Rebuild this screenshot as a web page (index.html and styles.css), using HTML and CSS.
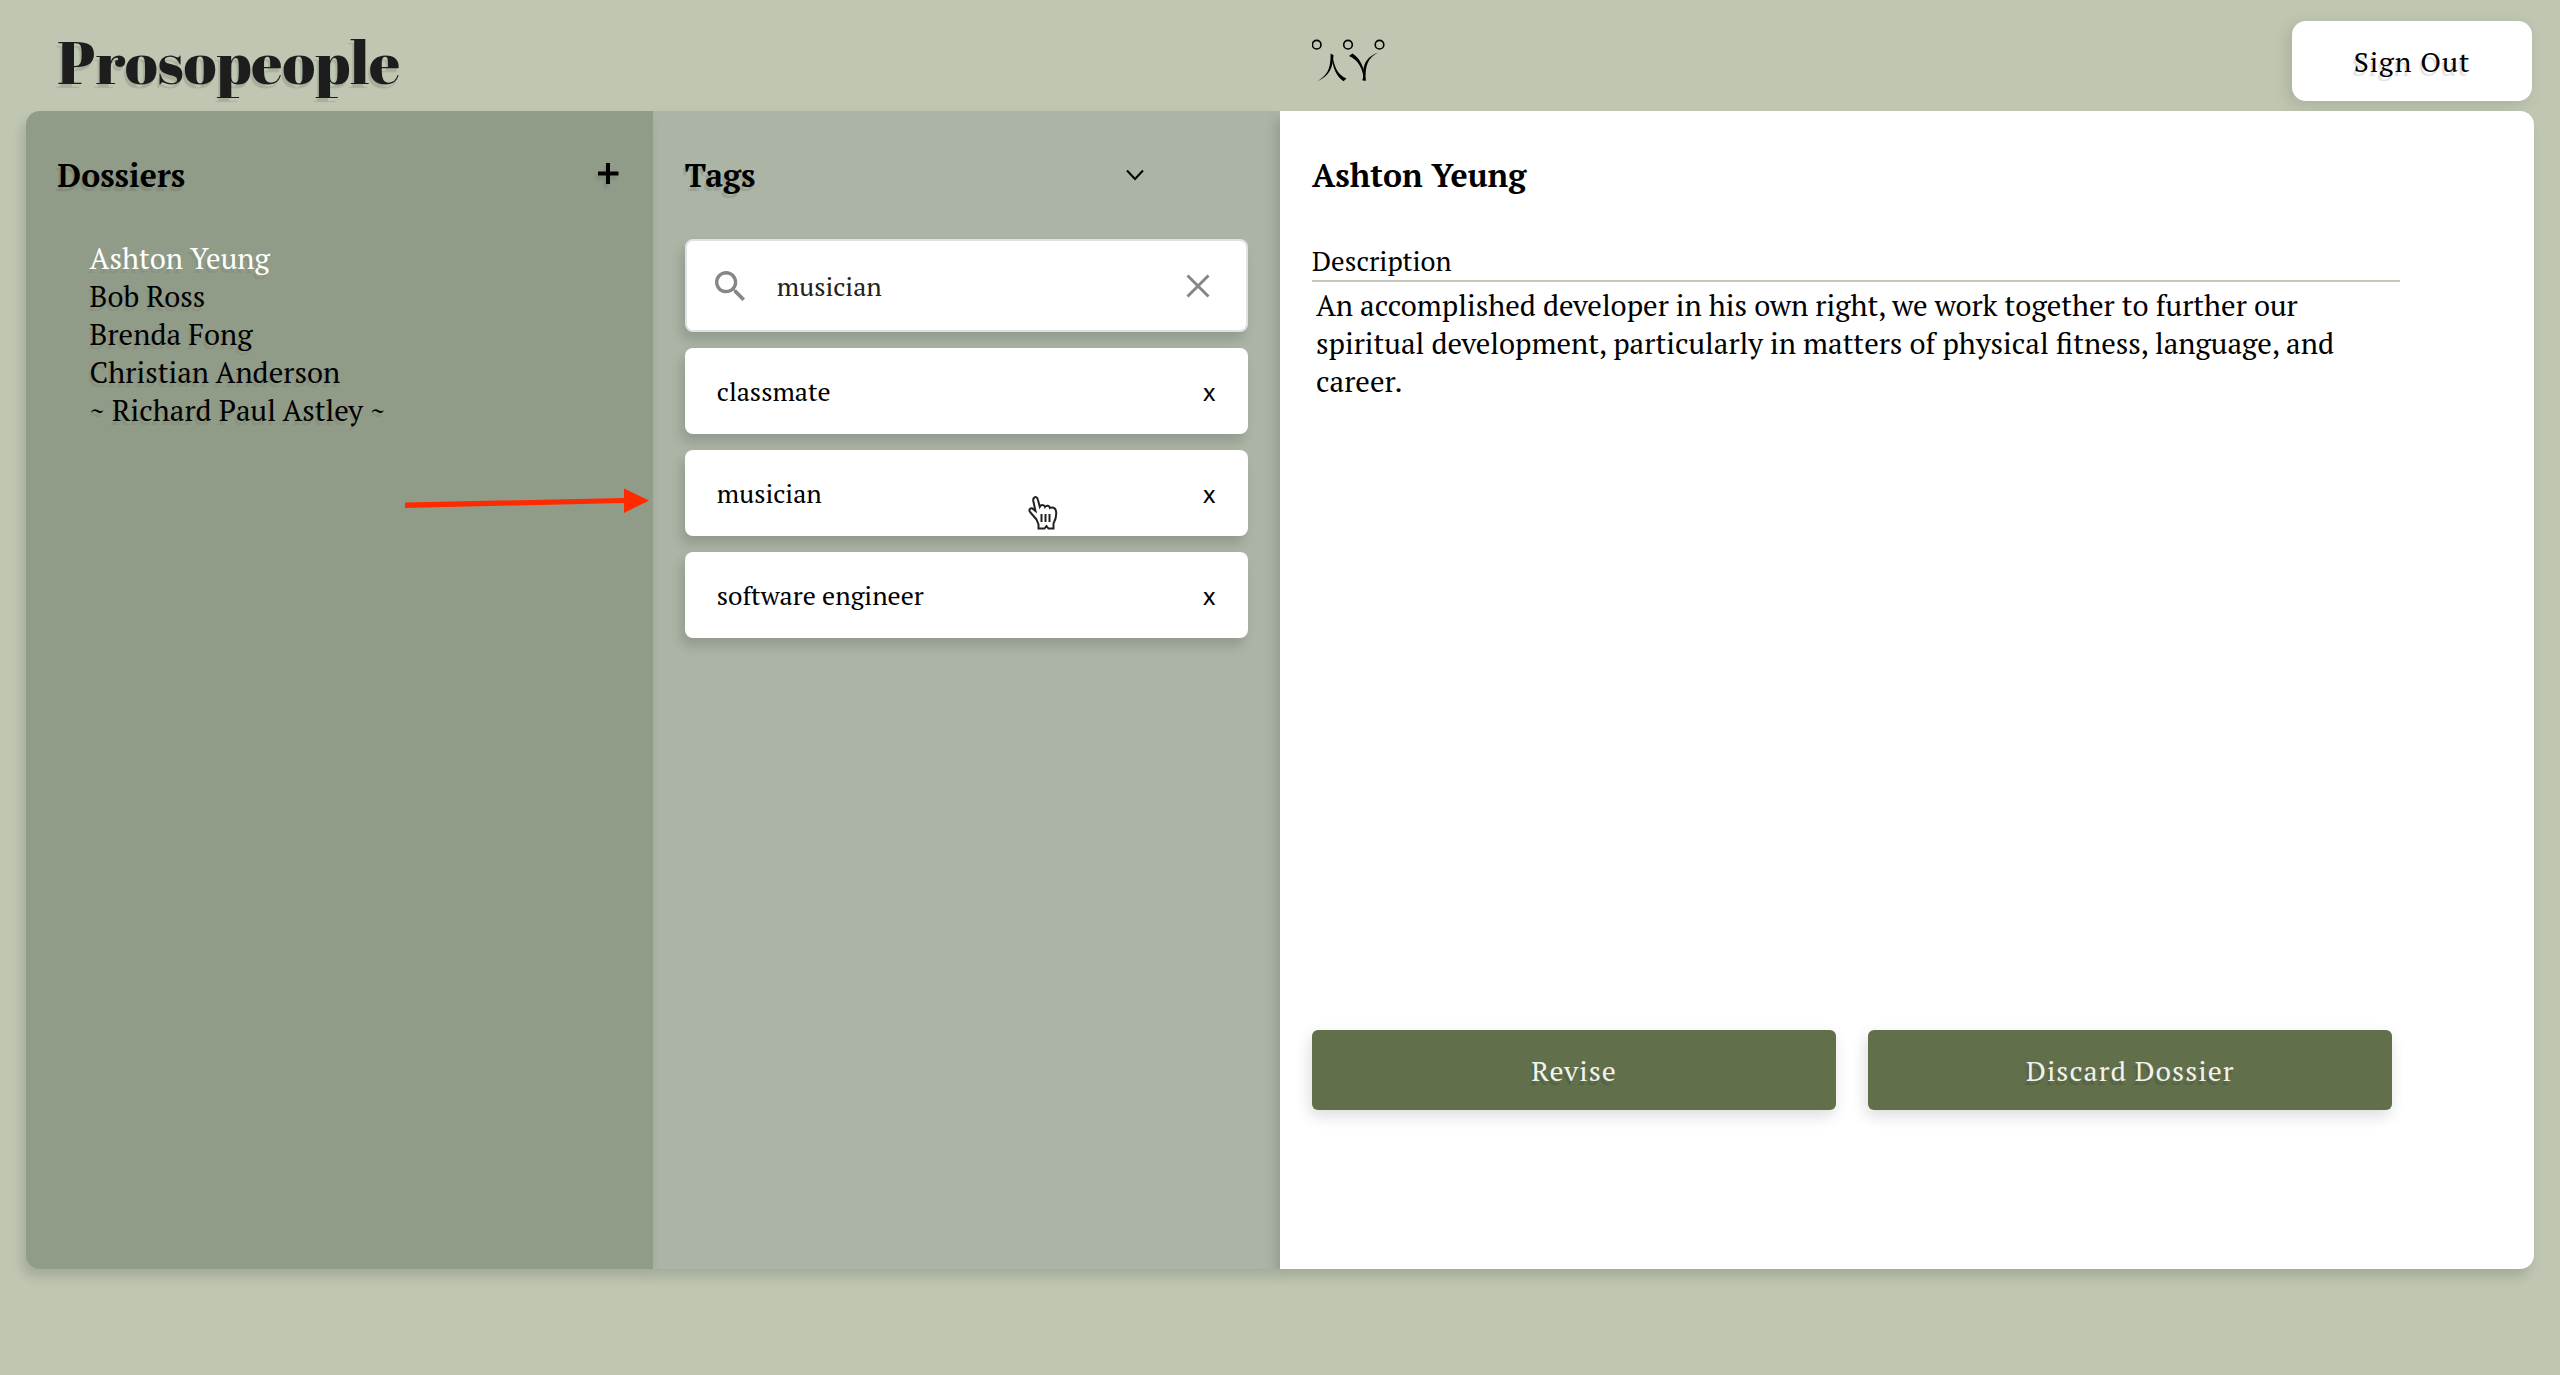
FILE: index.html
```html
<!DOCTYPE html>
<html lang="en">
<head>
  <meta charset="utf-8">
  <meta name="viewport" content="width=device-width, initial-scale=1">
  <title>Prosopeople</title>
  <link rel="stylesheet" href="styles.css">
</head>
<body>
  <header class="header">
    <h1 class="brand">Prosopeople</h1>
    <div class="header-end">
      <svg class="logo" viewBox="1 0 76 44" width="76" height="44" aria-hidden="true">
        <g fill="none" stroke="#000" stroke-width="1.6">
          <circle cx="5.700" cy="5.700" r="4.300"/>
          <circle cx="37" cy="5.700" r="4.300"/>
          <circle cx="68.500" cy="5.700" r="4.300"/>
        </g>
        <path d="M19 14.500L22.500 16C21.800 28 19 37 6.500 42.200C15.500 36.500 19.800 31 19.600 15Z"/>
        <path d="M21.500 16C23 28 27 36 35.500 39.500L32.500 42.200C25.500 37.500 21.500 29 20.800 17Z"/>
        <path d="M38 17L41.500 14.500C49 19 53.500 28 54.500 41.500L53 41.500C52 30 47.500 21 38 17Z"/>
        <path d="M67 13.800C56.500 19 54 27 54.700 41.800L51 41.200C52.700 40 52 36 52.200 32C53 23 57.500 17 67 13.800Z"/>
      </svg>
      <button class="button sign-out" type="button">Sign Out</button>
    </div>
  </header>

  <main class="board">
    <section class="panel dossiers">
      <div class="panel-head">
        <h2 class="heading shaded">Dossiers</h2>
        <button class="icon-button" type="button" aria-label="Add dossier">
          <svg class="plus" viewBox="0 0 24 24" width="24" height="24" aria-hidden="true"><path d="M11 0V21M1 10.500H21.500"/></svg>
        </button>
      </div>
      <ul class="dossier-list">
        <li><a class="dossier selected" href="#">Ashton Yeung</a></li>
        <li><a class="dossier" href="#">Bob Ross</a></li>
        <li><a class="dossier" href="#">Brenda Fong</a></li>
        <li><a class="dossier" href="#">Christian Anderson</a></li>
        <li><a class="dossier" href="#">~ Richard Paul Astley ~</a></li>
      </ul>
      <svg class="arrow" viewBox="0 0 244 26" width="244" height="26" aria-hidden="true">
        <path d="M0 14.500L219 10V0.500L244 12.500L219 25V15L0 20Z"/>
      </svg>
    </section>

    <section class="panel tags">
      <div class="panel-head">
        <h2 class="heading shaded">Tags</h2>
        <button class="icon-button toggle" type="button" aria-label="Toggle tags">
          <svg class="chevron" viewBox="0 0 20 12" width="20" height="12" aria-hidden="true"><path d="M2 1.500L10 10L18 1.500"/></svg>
        </button>
      </div>
      <div class="tag-stack">
        <div class="search">
          <svg class="search-icon" viewBox="3 3 17.500 17.500" width="30" height="30" aria-hidden="true"><path d="M15.500 14h-.79l-.28-.27C15.410 12.590 16 11.110 16 9.500 16 5.910 13.090 3 9.500 3S3 5.910 3 9.500 5.910 16 9.500 16c1.610 0 3.090-.59 4.230-1.570l.27.28v.79l5 4.990L20.490 19l-4.990-5zm-6 0C7.010 14 5 11.990 5 9.500S7.010 5 9.500 5 14 7.010 14 9.500 11.990 14 9.500 14z"/></svg>
          <input class="search-input" type="text" aria-label="Search tags" value="musician">
          <button class="icon-button" type="button" aria-label="Clear search">
            <svg class="clear" viewBox="0 0 24 24" width="24" height="24" aria-hidden="true"><path d="M1.500 1.500L22.500 22.500M22.500 1.500L1.500 22.500"/></svg>
          </button>
        </div>
        <ul class="tag-list">
          <li class="tag">classmate<button class="icon-button remove" type="button" aria-label="Remove classmate">x</button></li>
          <li class="tag">musician<button class="icon-button remove" type="button" aria-label="Remove musician">x</button>
            <svg class="pointer" viewBox="0 0 32 36" width="32" height="36" aria-hidden="true">
              <path d="M9.500 24.500L3.500 17.500C1.500 15.500 2.500 12.800 5 13.200L8.500 16L6.300 6C5.700 1.500 10 .8 10.800 4.500L12.800 11.800C14 9.500 17 9.500 18 12C19.500 10 22.500 10.500 23 13C25 11.800 28.500 12.500 29 16C30 22 28.500 25 26.500 28.500V33.500H21.500L19.500 31L17.500 33.500H11.500V29.500Z"/>
              <path d="M14.500 19V27M18.500 19V27M22.500 19V27"/>
            </svg>
          </li>
          <li class="tag">software engineer<button class="icon-button remove" type="button" aria-label="Remove software engineer">x</button></li>
        </ul>
      </div>
    </section>

    <section class="panel detail">
      <div class="panel-head">
        <h2 class="heading">Ashton Yeung</h2>
      </div>
      <h3 class="field-label">Description</h3>
      <p class="field-text">An accomplished developer in his own right, we work together to further our spiritual development, particularly in matters of physical fitness, language, and career.</p>
      <div class="actions">
        <button class="button action" type="button">Revise</button>
        <button class="button action" type="button">Discard Dossier</button>
      </div>
    </section>
  </main>
</body>
</html>
```
FILE: styles.css
```css
* {
  box-sizing: border-box;
}

body {
  margin: 0;
  min-height: 100vh;
  padding: 0 1%;
  display: flex;
  flex-direction: column;
  background: #bfc7b2;
  color: #000;
  font-family: "PT Serif", "Liberation Serif", serif;
  font-size: 29px;
}

h1, h2, h3, p, ul {
  margin: 0;
  padding: 0;
}

ul {
  list-style: none;
}

button, input {
  border: 0;
  padding: 0;
  background: none;
  color: inherit;
  font: inherit;
}

.header {
  display: grid;
  grid-template-columns: 1fr 1fr;
  align-items: center;
  padding: 21px 0 10px;
}

.brand {
  padding-left: 32px;
  color: #1d1d1d;
  font-family: "Abril Fatface", "Liberation Serif", serif;
  font-size: 60px;
  font-weight: 400;
  line-height: 76px;
  text-shadow: -2px 4px 1px rgba(0, 0, 0, 0.12);
}

.header-end {
  display: flex;
  align-items: center;
  justify-content: space-between;
  padding-left: 32px;
}

.button {
  height: 80px;
  font-size: 28px;
  letter-spacing: 1px;
  text-shadow: -2px 4px 1px rgba(0, 0, 0, 0.12);
}

.sign-out {
  margin-right: 2px;
  padding: 0 62px;
  border-radius: 14px;
  background: #fff;
  box-shadow: -4px 4px 16px rgba(0, 0, 0, 0.12);
}

.board {
  flex: 1;
  display: grid;
  grid-template-columns: 1fr 1fr 2fr;
  margin-bottom: 106px;
}

.panel {
  position: relative;
  padding: 40px 32px;
  box-shadow: -4px 8px 12px rgba(0, 0, 0, 0.14);
}

.dossiers {
  z-index: 1;
  border-radius: 14px 0 0 14px;
  background: #919c88;
}

.tags {
  background: #abb4a5;
}

.detail {
  display: flex;
  flex-direction: column;
  padding-right: 134px;
  border-radius: 0 14px 14px 0;
  background: #fff;
}

.panel-head {
  display: flex;
  align-items: center;
  justify-content: space-between;
  margin-bottom: 40px;
}

.heading {
  font-size: 32px;
  line-height: 48px;
}

.shaded {
  text-shadow: -2px 4px 1px rgba(0, 0, 0, 0.1);
}

.icon-button {
  display: flex;
  align-items: center;
}

.plus {
  fill: none;
  stroke: #000;
  stroke-width: 4;
  filter: drop-shadow(-2px 4px 1px rgba(0, 0, 0, 0.1));
}

.dossier-list {
  padding-left: 32px;
  line-height: 38px;
}

.dossier {
  color: #000;
  text-decoration: none;
  text-shadow: -2px 4px 1px rgba(0, 0, 0, 0.07);
}

.selected {
  color: #fff;
}

.arrow {
  position: absolute;
  top: 377px;
  right: 4px;
  fill: #ff2a00;
}

.toggle {
  padding-right: 103px;
}

.chevron {
  fill: none;
  stroke: #000;
  stroke-width: 2;
}

.tag-stack, .tag-list {
  display: flex;
  flex-direction: column;
  gap: 16px;
}

.search, .tag {
  display: flex;
  align-items: center;
  border-radius: 8px;
  background: #fff;
  box-shadow: -4px 8px 12px rgba(0, 0, 0, 0.14);
  font-size: 26px;
}

.search {
  gap: 32px;
  height: 93px;
  padding: 0 36px 0 28px;
  border: 2px solid #dfe1e5;
}

.search-icon {
  flex: none;
  fill: #868686;
}

.search-input {
  flex: 1;
  min-width: 0;
  color: #212121;
  outline: 0;
}

.clear {
  fill: none;
  stroke: #868686;
  stroke-width: 3;
}

.tag {
  position: relative;
  justify-content: space-between;
  height: 86px;
  padding: 0 32px;
}

.remove {
  font-family: "PT Sans", "Noto Sans", sans-serif;
  font-size: 26px;
  font-weight: 500;
}

.pointer {
  position: absolute;
  top: 45px;
  left: 342px;
  fill: #fff;
  stroke: #222;
  stroke-width: 2;
}

.field-label {
  padding-top: 4px;
  padding-bottom: 1px;
  border-bottom: 2px solid #c4cab7;
  font-size: 27px;
  font-weight: 400;
  line-height: 36px;
}

.field-text {
  padding: 4px;
  line-height: 38px;
}

.actions {
  display: grid;
  grid-template-columns: 1fr 1fr;
  gap: 32px;
  margin: auto 8px 119px 0;
}

.action {
  border-radius: 6px;
  background: #616f4b;
  color: #f0f2ec;
  box-shadow: -2px 6px 16px rgba(0, 0, 0, 0.14);
}
```
